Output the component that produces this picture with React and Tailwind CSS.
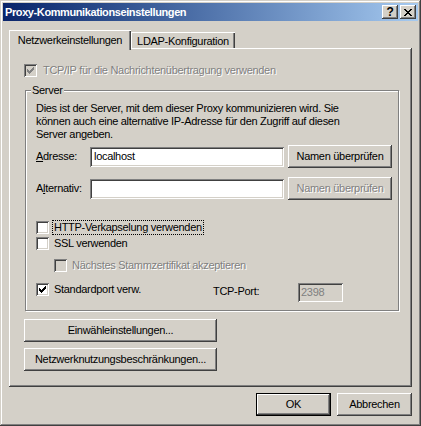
import React from "react";

const RAISED =
  "shadow-[inset_-1px_-1px_#404040,inset_1px_1px_#ffffff,inset_-2px_-2px_#808080,inset_2px_2px_#d4d0c8]";
const SUNKEN =
  "shadow-[inset_1px_1px_#808080,inset_-1px_-1px_#ffffff,inset_2px_2px_#404040,inset_-2px_-2px_#d4d0c8]";
const DISABLED = "text-[#808080] [text-shadow:1px_1px_0_#ffffff]";

function Check({ color = "#000" }) {
  return (
    <svg width="7" height="7" viewBox="0 0 7 7" shapeRendering="crispEdges" className="absolute left-[3px] top-[3px]">
      <path
        fill={color}
        d="M0 2h1v3H0zM1 3h1v3H1zM2 4h1v3H2zM3 3h1v3H3zM4 2h1v3H4zM5 1h1v3H5zM6 0h1v3H6z"
      />
    </svg>
  );
}

function Checkbox({ checked, disabled }) {
  return (
    <span
      className={`relative block w-[13px] h-[13px] shrink-0 ${disabled ? "bg-[#d4d0c8]" : "bg-white"} ${SUNKEN}`}
    >
      {checked && <Check color={disabled ? "#808080" : "#000"} />}
    </span>
  );
}

function Button({ children, className = "", disabled }) {
  return (
    <div
      className={`flex items-center justify-center bg-[#d4d0c8] ${RAISED} ${disabled ? DISABLED : "text-black"} ${className}`}
    >
      {children}
    </div>
  );
}

export default function App() {
  return (
    <div
      className="w-[421px] h-[426px] bg-[#d4d0c8] p-[3px] flex flex-col text-[11px] leading-[13px] tracking-[-0.3px] text-black shadow-[inset_-1px_-1px_#404040,inset_1px_1px_#d4d0c8,inset_-2px_-2px_#808080,inset_2px_2px_#ffffff]"
      style={{ fontFamily: '"Liberation Sans", Arial, sans-serif' }}
    >
      {/* title bar */}
      <div className="h-[18px] flex items-center justify-between pl-[2px] pr-[2px] bg-linear-to-r from-[#0a246a] to-[#a6caf0]">
        <span className="font-bold text-white tracking-[-0.4px]">Proxy-Kommunikationseinstellungen</span>
        <div className="flex gap-[2px]">
          <Button className="w-[16px] h-[14px] font-bold text-[12px] leading-none pb-[1px]">?</Button>
          <Button className="w-[16px] h-[14px]">
            <svg width="8" height="7" viewBox="0 0 8 7" shapeRendering="crispEdges">
              <path
                fill="#000"
                d="M0 0h2v1H0zM6 0h2v1H6zM1 1h2v1H1zM5 1h2v1H5zM2 2h4v1H2zM3 3h2v1H3zM2 4h4v1H2zM1 5h2v1H1zM5 5h2v1H5zM0 6h2v1H0zM6 6h2v1H6z"
              />
            </svg>
          </Button>
        </div>
      </div>

      {/* tabs */}
      <div className="mt-[9px] ml-[6px] h-[18px] flex items-end relative z-10">
        <div className="w-[122px] h-[20px] -mb-[2px] bg-[#d4d0c8] flex justify-center pt-[4px] shadow-[inset_1px_1px_#ffffff,inset_-1px_0_#404040,inset_-2px_0_#808080]">
          Netzwerkeinstellungen
        </div>
        <div className="w-[104px] h-[16px] bg-[#d4d0c8] flex justify-center pt-[3px] shadow-[inset_1px_1px_#ffffff,inset_-1px_0_#404040,inset_-2px_0_#808080]">
          LDAP-Konfiguration
        </div>
      </div>

      {/* panel */}
      <div className={`ml-[6px] w-[403px] h-[339px] flex flex-col pl-[15px] pt-[16px] ${RAISED}`}>
        <div className="h-[13px] flex items-center">
          <Checkbox checked disabled />
          <span className={`ml-[6px] ${DISABLED}`}>TCP/IP für die Nachrichtenübertragung verwenden</span>
        </div>

        {/* server group */}
        <div className="relative mt-[13px] ml-[1px] w-[374px] h-[221px] border border-[#808080] shadow-[1px_1px_#ffffff,inset_1px_1px_#ffffff] flex flex-col pl-[10px] pt-[11px]">
          <span className="absolute left-[5px] -top-[7px] px-[1px] bg-[#d4d0c8]">Server</span>
          <p>
            Dies ist der Server, mit dem dieser Proxy kommunizieren wird. Sie
            <br />
            können auch eine alternative IP-Adresse für den Zugriff auf diesen
            <br />
            Server angeben.
          </p>

          <div className="mt-[4px] h-[23px] flex items-center">
            <span className="w-[54px]">
              <span className="underline">A</span>dresse:
            </span>
            <div className={`w-[194px] h-[20px] bg-white flex items-center pl-[4px] ${SUNKEN}`}>localhost</div>
            <Button className="ml-[4px] w-[104px] h-[23px]">Namen überprüfen</Button>
          </div>

          <div className="mt-[9px] h-[23px] flex items-center">
            <span className="w-[54px]">
              A<span className="underline">l</span>ternativ:
            </span>
            <div className={`w-[194px] h-[20px] bg-white ${SUNKEN}`} />
            <Button className="ml-[4px] w-[104px] h-[23px]" disabled>
              Namen überprüfen
            </Button>
          </div>

          <div className="mt-[21px] h-[13px] flex items-center">
            <Checkbox />
            <span className="ml-[3px] px-[1px] border border-dotted border-black leading-[13px]">
              HTTP-Verkapselung verwenden
            </span>
          </div>

          <div className="mt-[3px] h-[13px] flex items-center">
            <Checkbox />
            <span className="ml-[5px]">SSL verwenden</span>
          </div>

          <div className="mt-[9px] ml-[18px] h-[13px] flex items-center">
            <Checkbox disabled />
            <span className={`ml-[5px] ${DISABLED}`}>Nächstes Stammzertifikat akzeptieren</span>
          </div>

          <div className="mt-[11px] flex items-start">
            <div className="w-[177px] h-[13px] flex items-center">
              <Checkbox checked />
              <span className="ml-[5px]">Standardport verw.</span>
            </div>
            <span className="w-[85px] mt-[2px]">TCP-Port:</span>
            <div className={`w-[45px] h-[19px] bg-[#d4d0c8] flex items-center pl-[3px] text-[#808080] ${SUNKEN}`}>
              2398
            </div>
          </div>
        </div>

        <Button className="mt-[8px] w-[193px] h-[23px]">Einwähleinstellungen...</Button>
        <Button className="mt-[6px] w-[193px] h-[23px]">Netzwerknutzungsbeschränkungen...</Button>
      </div>

      {/* footer buttons */}
      <div className="mt-[6px] mr-[6px] flex justify-end gap-[6px]">
        <div className="w-[75px] h-[23px] border border-black">
          <Button className="w-full h-full">OK</Button>
        </div>
        <Button className="w-[75px] h-[23px]">Abbrechen</Button>
      </div>
    </div>
  );
}
